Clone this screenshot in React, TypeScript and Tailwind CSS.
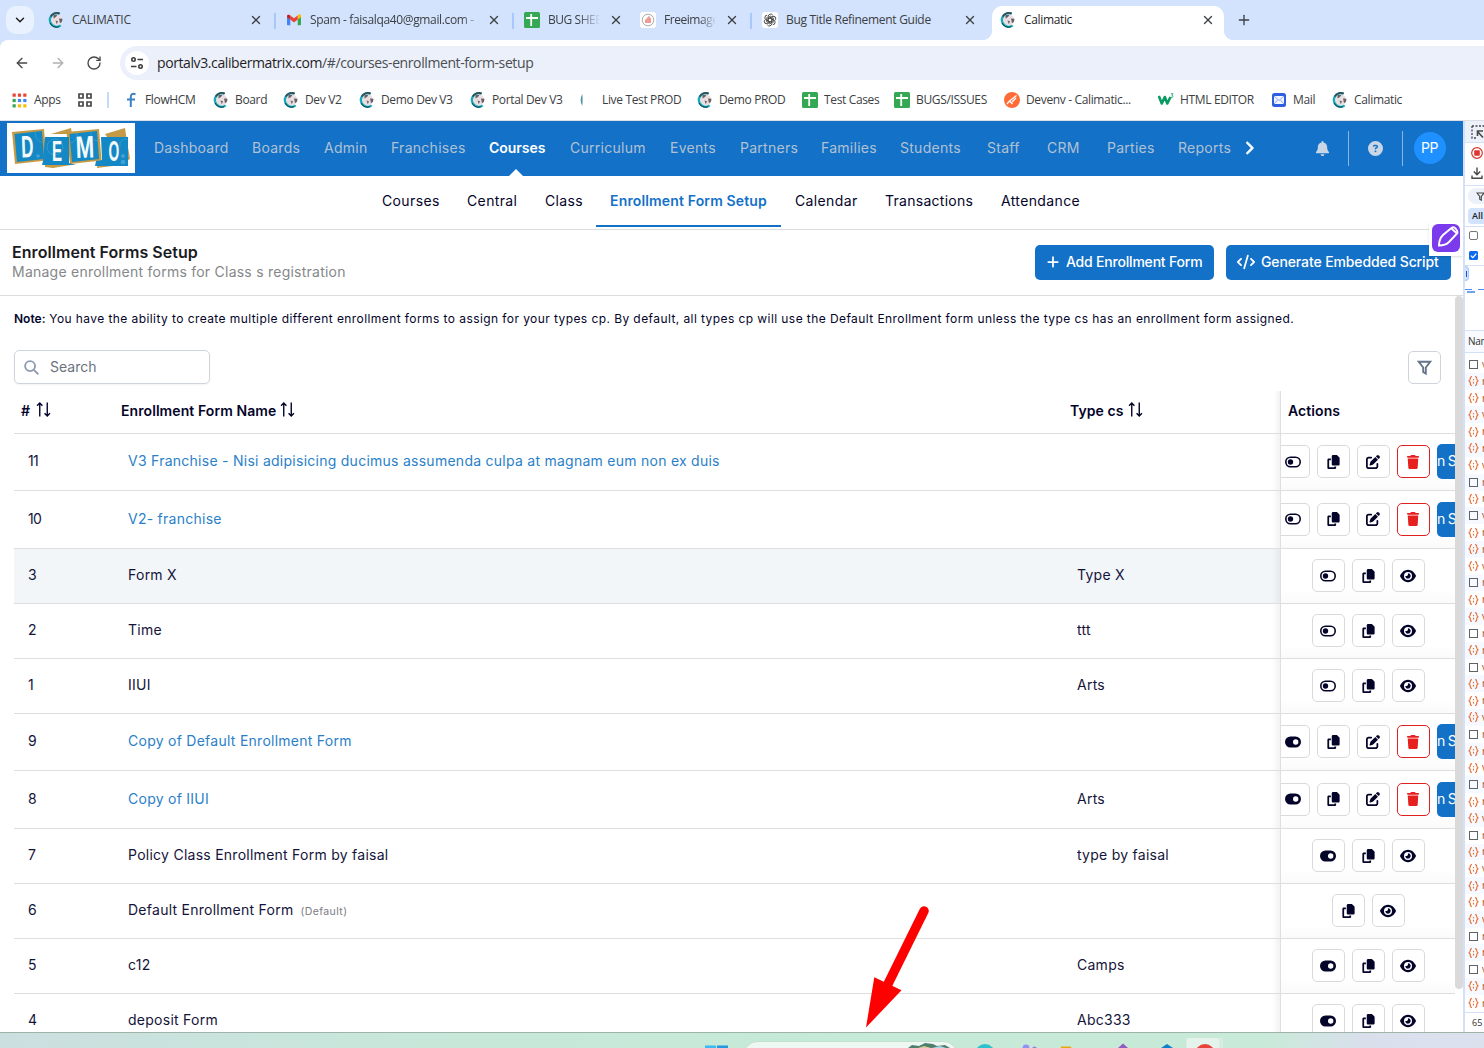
import React from "react";
import {
  FaBell,
  FaCircleQuestion,
  FaChevronRight,
  FaPlus,
  FaCode,
  FaTrash,
  FaEye,
  FaPenToSquare,
} from "react-icons/fa6";
import { ArrowLeft, ArrowRight, RotateCw, ChevronDown, X, Plus } from "lucide-react";

/* ---------- small drawings ---------- */

function Globe() {
  return (
    <svg viewBox="0 0 16 16" className="size-4 shrink-0">
      <circle cx="8.5" cy="7.800" r="5.600" fill="#eadfe0" />
      <path d="M5.500 3l4-.3-1.500 2.300-2.500 1.500zM7.500 8.500l2.500.8-1.200 3zM11 6.500l3.500.3-.5 3-2 1.500z" fill="#6d5f66" />
      <path d="M11.500 1.700A6.800 6.800 0 1 0 12.700 13.400" fill="none" stroke="#15a9ba" strokeWidth="2.400" />
      <path d="M11.800 1.600A6.900 6.900 0 0 0 2.600 4.600" fill="none" stroke="#3a4a52" strokeWidth="1.600" />
      <path d="M2 11A7 7 0 0 0 11 14.700" fill="none" stroke="#123b46" strokeWidth="1" />
    </svg>
  );
}

function Sheet() {
  return (
    <svg viewBox="0 0 16 16" className="size-4 shrink-0">
      <rect width="16" height="16" rx="1.500" fill="#34a853" />
      <path d="M2 6h12M7.200 2v12" stroke="#fff" strokeWidth="1.800" />
    </svg>
  );
}

function Gmail() {
  return (
    <svg viewBox="0 0 16 16" className="size-4 shrink-0">
      <path d="M1 4v8.500q0 .8.8.8H4.300V6z" fill="#4285f4" />
      <path d="M15 4v8.500q0 .8-.8.8h-2.500V6z" fill="#34a853" />
      <path d="M11.700 3.600v4L15 5.200V3.800c0-1.400-1.600-2-2.600-1.100z" fill="#fbbc04" />
      <path d="M4.300 7.600V3.600L8 6.300l3.700-2.700v4L8 10.400z" fill="#ea4335" />
      <path d="M1 5.200l3.300 2.400v-4l-.7-.5C2.600 2.300 1 2.900 1 4z" fill="#c5221f" />
    </svg>
  );
}

function Freeimage() {
  return (
    <svg viewBox="0 0 16 16" className="size-4 shrink-0">
      <rect width="16" height="16" rx="3" fill="#fff" />
      <circle cx="8" cy="8" r="5.800" fill="none" stroke="#9c9699" strokeWidth=".8" />
      <path d="M5 7.500h1.200L7 5.500h1L8.500 4h1v1.500l1.500.5V11H5z" fill="#ef9a92" />
    </svg>
  );
}

function ChatGpt() {
  return (
    <svg viewBox="0 0 16 16" className="size-4 shrink-0">
      <rect width="16" height="16" rx="3" fill="#fff" />
      <g fill="none" stroke="#444" strokeWidth=".9">
        {[0, 60, 120, 180, 240, 300].map((a) => (
          <path key={a} transform={`rotate(${a} 8 8)`} d="M6.200 9V4.400a2.500 2.500 0 0 1 4.600-1.200M6.200 6.900L9.300 5.100l2.700 1.600" />
        ))}
      </g>
    </svg>
  );
}

function Postman() {
  return (
    <svg viewBox="0 0 16 16" className="size-4 shrink-0">
      <circle cx="8" cy="8" r="8" fill="#ff6c37" />
      <path d="M12.500 3.500L5.500 9l3 3M12 6l-4 4M5.500 9L3 12" stroke="#fff" strokeWidth="1.300" fill="none" />
    </svg>
  );
}

function W3() {
  return (
    <svg viewBox="0 0 16 16" className="size-4 shrink-0">
      <path d="M.8 4l3 7.500L6.800 5l2.500 6.500 3.200-6.500" fill="none" stroke="#0a9b62" strokeWidth="2.600" strokeLinejoin="round" />
      <path d="M13 1.700h2l-1.200 1.500q1.400.2 1.200 1.400-.5 1-2 .6" fill="none" stroke="#0a9b62" strokeWidth=".8" />
    </svg>
  );
}

function MailIcon() {
  return (
    <svg viewBox="0 0 16 16" className="size-4 shrink-0">
      <rect x="1" y="1" width="14" height="14" rx="2.500" fill="#2f5fe0" />
      <rect x="3" y="4" width="10" height="8" fill="#f3f6ff" />
      <path d="M3 4l5 4.500L13 4M3 12l3.500-4M13 12L9.500 8" stroke="#7d9cf0" strokeWidth=".9" fill="none" />
    </svg>
  );
}

function FlowIcon() {
  return (
    <svg viewBox="0 0 16 16" className="size-4 shrink-0">
      <path d="M12.500 2.200Q7.800.8 7.800 5v10M4 7.500h8" fill="none" stroke="#3b82c4" strokeWidth="2" />
    </svg>
  );
}

function LiveIcon() {
  return (
    <svg viewBox="0 0 16 16" className="size-4 shrink-0">
      <path d="M2.300 2Q-1 8 2.300 14Q2.900 8 2.300 2z" fill="#4f93b0" />
    </svg>
  );
}

function DemoLogo() {
  return (
    <svg viewBox="0 0 128 50" className="h-[50px] w-32 bg-white">
      <g fill="#c49a45">
        <path d="M44 11l20-6 1 6zM38 44l0-3 32 0-24 4zM98 11l20-6 1 7 4 24-5 3zM91 39l8 4 14-1-23 3z" />
        <path d="M5 9l32-3 2.500 31.500L8 41z" />
        <path d="M59.500 9l32.500-3 2.500 31.500L63 41z" />
      </g>
      <path d="M38 14h24v26l6 2H35l1-4z" fill="#1388c5" />
      <path d="M94 14h27v29H88l1-5 6-1z" fill="#1388c5" />
      <path d="M7.500 11L35 8l2 28-27 3z" fill="#1388c5" />
      <path d="M62.500 11L90 8l2 28-27 3z" fill="#1388c5" />
      <g fill="none" stroke="#55b3dd" strokeWidth=".7" opacity=".6">
        <circle cx="48" cy="24" r="8" />
        <path d="M28 9q0 9 9 11M84 9q-1 8 7 9M64 20q6-2 6-10M120 16q-8 0-7 8" />
      </g>
      <g fill="#3ea3d4">
        <circle cx="31" cy="33" r="1.800" />
        <circle cx="116" cy="33" r="2" />
        <circle cx="116" cy="39" r="2.300" />
      </g>
      <g fill="#f4f8fa" fontFamily="Liberation Sans" fontWeight="700">
        <text fontSize="31" transform="translate(14.500 34.500) rotate(-2) scale(.55 1)">D</text>
        <text fontSize="29" transform="translate(45 37.500) scale(.52 1)">E</text>
        <text fontSize="31" transform="translate(69 35) rotate(-2) scale(.72 1)">M</text>
        <text fontSize="30" transform="translate(101.500 38) scale(.46 1)">O</text>
      </g>
    </svg>
  );
}

function SortIcon() {
  return (
    <svg viewBox="0 0 14 14" className="-mt-1 h-[15px] w-[15px]" fill="none" stroke="#04042a" strokeWidth="1.300">
      <path d="M3.500 13.500V1M1 3.600L3.500 1 6 3.600M10.500.5V13M8 10.400L10.500 13 13 10.400" />
    </svg>
  );
}

function CopyIcon() {
  return (
    <svg viewBox="0 0 448 512" className="h-3.5 w-[13px]" fill="currentColor">
      <path d="M208 0H332.100c12.700 0 24.900 5.100 33.900 14.100l67.900 67.900c9 9 14.100 21.200 14.100 33.900V336c0 26.500-21.500 48-48 48H208c-26.500 0-48-21.500-48-48V48c0-26.500 21.500-48 48-48zM48 128h80v64H64V448H256V416h64v48c0 26.500-21.500 48-48 48H48c-26.500 0-48-21.500-48-48V176c0-26.500 21.500-48 48-48z" />
    </svg>
  );
}

function Toggle({ on }: { on?: boolean }) {
  return on ? (
    <svg viewBox="0 0 16 12" className="h-3 w-4">
      <rect y=".5" width="16" height="11" rx="5.500" fill="#04042a" />
      <circle cx="10.700" cy="6" r="2.700" fill="#fff" />
    </svg>
  ) : (
    <svg viewBox="0 0 16 12" className="h-3 w-4">
      <rect x=".8" y="1.300" width="14.400" height="9.400" rx="4.700" fill="none" stroke="#04042a" strokeWidth="1.600" />
      <circle cx="5.500" cy="6" r="2.700" fill="#04042a" />
    </svg>
  );
}

function Funnel({ className }: { className: string }) {
  return (
    <svg viewBox="0 0 16 16" className={className} fill="none" stroke="currentColor" strokeWidth="2">
      <path d="M1.800 1.800h12.400L9.400 8v6.500L6.600 12.800V8z" />
    </svg>
  );
}

/* ---------- browser chrome ---------- */

function TabClose() {
  return <X className="size-3.5 shrink-0 text-[#3c4043]" strokeWidth={2.300} />;
}

function TabStrip() {
  return (
    <div className="flex h-10 shrink-0 items-end bg-[#d3e3fd] text-xs tracking-[-0.35px] text-[#3c4043]">
      <div className="mb-1.5 ml-1.5 flex size-7 shrink-0 items-center justify-center rounded-[10px] bg-[#e9f0fe]">
        <ChevronDown className="size-3.5 text-[#1f1f1f]" strokeWidth={2.500} />
      </div>
      <div className="flex h-10 w-[240px] items-center pr-[11px] pl-3.5">
        <Globe />
        <span className="ml-2 grow tracking-[-0.2px]">CALIMATIC</span>
        <TabClose />
      </div>
      <div className="flex h-10 w-[238px] items-center">
        <div className="mt-0.5 h-4 w-0.5 bg-[#a8c7fa]" />
        <div className="ml-2.5"><Gmail /></div>
        <span className="ml-2 w-[172px] overflow-hidden whitespace-nowrap [mask-image:linear-gradient(90deg,#000_88%,transparent)]">Spam - faisalqa40@gmail.com -</span>
        <span className="ml-[5px]"><TabClose /></span>
      </div>
      <div className="flex h-10 w-[126px] items-center">
        <div className="mt-0.5 h-4 w-0.5 bg-[#a8c7fa]" />
        <div className="ml-2.5"><Sheet /></div>
        <span className="ml-2 w-[52px] overflow-hidden tracking-[-0.45px] whitespace-nowrap [mask-image:linear-gradient(90deg,#000_60%,transparent)]">BUG SHEE</span>
        <span className="ml-[9px]"><TabClose /></span>
      </div>
      <div className="flex h-10 w-[112px] items-center pl-0.5">
        <Freeimage />
        <span className="ml-2 w-[52px] overflow-hidden tracking-[-0.45px] whitespace-nowrap [mask-image:linear-gradient(90deg,#000_70%,transparent)]">Freeimage</span>
        <span className="ml-[9px]"><TabClose /></span>
      </div>
      <div className="flex h-10 w-[242px] items-center">
        <div className="mt-0.5 h-4 w-0.5 bg-[#a8c7fa]" />
        <div className="ml-2.5"><ChatGpt /></div>
        <span className="ml-2 w-[177px] tracking-[-0.3px] whitespace-nowrap">Bug Title Refinement Guide</span>
        <TabClose />
      </div>
      <div className="relative flex h-[34px] w-[232px] items-center rounded-t-[10px] bg-white pr-[9px] pb-1.5 pl-2 text-[#1f1f1f]">
        <span className="absolute bottom-0 -left-2.5 size-2.5 bg-[radial-gradient(circle_at_0_0,transparent_10px,#fff_10.500px)]" />
        <span className="absolute -right-2.5 bottom-0 size-2.5 bg-[radial-gradient(circle_at_100%_0,transparent_10px,#fff_10.500px)]" />
        <Globe />
        <span className="ml-2 grow">Calimatic</span>
        <TabClose />
      </div>
      <div className="flex h-10 items-center pl-3">
        <Plus className="size-4 text-[#3c4043]" strokeWidth={2} />
      </div>
    </div>
  );
}

function Toolbar() {
  return (
    <div className="shrink-0 bg-[#d3e3fd]">
      <div className="flex h-10 items-center rounded-tl-lg bg-white pt-1.5 text-[#474747]">
        <ArrowLeft className="ml-3.5 size-4" strokeWidth={2} />
        <ArrowRight className="ml-5 size-4 text-[#b0b0b0]" strokeWidth={2} />
        <RotateCw className="ml-5 size-4" strokeWidth={2} />
        <div className="ml-[18px] flex h-[34px] grow items-center rounded-l-full bg-[#ecf0fa]">
          <div className="ml-[5px] flex size-6 items-center justify-center rounded-full bg-white">
            <svg viewBox="0 0 14 14" className="size-3.5" fill="none" stroke="#3c3c3c" strokeWidth="1.600">
              <circle cx="3.500" cy="3.500" r="1.700" />
              <path d="M7.500 3.500H13M1 10.500h5.500" />
              <circle cx="10.500" cy="10.500" r="1.700" />
            </svg>
          </div>
          <span className="ml-2 text-sm tracking-[-0.4px] text-[#4a4d51]">
            <span className="text-[#1f1f1f]">portalv3.calibermatrix.com</span>/#/courses-enrollment-form-setup
          </span>
        </div>
      </div>
    </div>
  );
}

const bookmarks: [React.ReactNode, string, string][] = [
  [<FlowIcon />, "FlowHCM", "w-[90px]"],
  [<Globe />, "Board", "w-[70px]"],
  [<Globe />, "Dev V2", "w-[76px]"],
  [<Globe />, "Demo Dev V3", "w-[111px]"],
  [<Globe />, "Portal Dev V3", "w-[110px]"],
  [<LiveIcon />, "Live Test PROD", "w-[117px]"],
  [<Globe />, "Demo PROD", "w-[105px]"],
  [<Sheet />, "Test Cases", "w-[92px]"],
  [<Sheet />, "BUGS/ISSUES", "w-[110px]"],
  [<Postman />, "Devenv - Calimatic...", "w-[154px]"],
  [<W3 />, "HTML EDITOR", "w-[113px]"],
  [<MailIcon />, "Mail", "w-[61px]"],
  [<Globe />, "Calimatic", "w-[90px]"],
];

function Bookmarks() {
  const colors = ["#ea4335", "#ea4335", "#ea4335", "#34a853", "#4285f4", "#4285f4", "#34a853", "#fbbc04", "#fbbc04"];
  return (
    <div className="flex h-[41px] shrink-0 items-center border-b border-[#dcdfe4] bg-white text-xs tracking-[-0.35px] whitespace-nowrap text-[#3c4043]">
      <svg viewBox="0 0 14 14" className="ml-3 size-[15px]">
        {colors.map((c, i) => (
          <rect key={i} x={(i % 3) * 5 + 0.5} y={Math.floor(i / 3) * 5 + 0.5} width="3" height="3" fill={c} />
        ))}
      </svg>
      <span className="ml-[7px] w-[43px]">Apps</span>
      <svg viewBox="0 0 16 16" className="size-4" fill="none" stroke="#474747" strokeWidth="1.700">
        <path d="M2 2h4v4H2zM10 2h4v4h-4zM2 10h4v4H2zM10 10h4v4h-4z" />
      </svg>
      <div className="mr-3.5 ml-3.5 h-4 w-0.5 bg-[#c7dafc]" />
      {bookmarks.map(([icon, label, w]) => (
        <div key={label + w} className={`flex shrink-0 items-center gap-1.5 ${w}`}>
          {icon}
          <span>{label}</span>
        </div>
      ))}
    </div>
  );
}

/* ---------- application ---------- */

const nav: [string, string][] = [
  ["Dashboard", "w-[98px]"],
  ["Boards", "w-[72px]"],
  ["Admin", "w-[67px]"],
  ["Franchises", "w-[98px]"],
  ["Courses", "w-[81px]"],
  ["Curriculum", "w-[100px]"],
  ["Events", "w-[70px]"],
  ["Partners", "w-[81px]"],
  ["Families", "w-[79px]"],
  ["Students", "w-[87px]"],
  ["Staff", "w-[60px]"],
  ["CRM", "w-[60px]"],
  ["Parties", "w-[71px]"],
  ["Reports", "w-[65px]"],
];

function AppNav() {
  return (
    <div className="flex h-[55px] shrink-0 items-center bg-[#1371c8] pb-px text-sm tracking-[0.27px] text-[#b1c1d2]">
      <div className="ml-[7px]"><DemoLogo /></div>
      <div className="ml-[19px] flex pb-px">
        {nav.map(([label, w]) =>
          label === "Courses" ? (
            <div key={label} className={`relative font-semibold tracking-[-0.05px] text-white ${w}`}>
              {label}
              <span className="absolute top-[31px] left-[18.500px] border-x-8 border-b-8 border-x-transparent border-b-white" />
            </div>
          ) : (
            <div key={label} className={w}>{label}</div>
          ),
        )}
      </div>
      <FaChevronRight className="-ml-[1.500px] size-3.5 text-white" strokeWidth={30} stroke="white" />
      <FaBell className="ml-[59px] size-[15px] text-[#c9d6e6]" />
      <div className="ml-[18px] h-[35px] w-px bg-[#8db4dc]" />
      <FaCircleQuestion className="ml-[19px] size-[15px] text-[#c9d6e6]" />
      <div className="ml-[19px] h-[35px] w-px bg-[#8db4dc]" />
      <div className="ml-[11px] flex size-8 items-center justify-center rounded-full bg-[#1e90ff] pb-px tracking-[-0.4px] text-white">PP</div>
    </div>
  );
}

function SubNav() {
  return (
    <div className="flex h-[54px] shrink-0 border-b border-[#dcdcdc] pl-[368px] text-sm leading-[49px] tracking-[0.37px] text-[#04042a]">
      <span className="w-[85px] pl-3.5">Courses</span>
      <span className="w-[78px] pl-3.5">Central</span>
      <span className="w-[65px] pl-3.5">Class</span>
      <span className="h-[51px] w-[185px] border-b-2 border-[#1371c8] text-center font-semibold tracking-[0.14px] whitespace-nowrap text-[#1371c8]">Enrollment Form Setup</span>
      <span className="w-[90px] pl-3.5">Calendar</span>
      <span className="w-[116px] pl-3.5 tracking-[0.27px]">Transactions</span>
      <span className="w-[110px] pl-3.5">Attendance</span>
    </div>
  );
}

function PageHeader() {
  return (
    <div className="relative flex h-[66px] shrink-0 items-center justify-between border-b border-[#dcdcdc] pr-3 pl-3">
      <div className="pb-0.5">
        <h1 className="text-base leading-5 font-semibold tracking-[0.06px] text-[#1b1b1f]">Enrollment Forms Setup</h1>
        <p className="text-sm leading-5 tracking-[0.24px] text-[#85878a]">Manage enrollment forms for Class s registration</p>
      </div>
      <div className="flex gap-3 text-sm font-medium tracking-[-0.12px] whitespace-nowrap text-white">
        <button className="flex h-[35px] w-[179px] items-center rounded-[5px] bg-[#1371c8] pb-px pl-[11px] tracking-[-0.2px]">
          <FaPlus className="mr-1.5 size-3.5" />
          Add Enrollment Form
        </button>
        <button className="flex h-[35px] w-[225px] items-center rounded-[5px] bg-[#1371c8] pb-px pl-[11px]">
          <FaCode className="mr-1.5 size-[18px]" />
          Generate Embedded Script
        </button>
      </div>
      <div className="absolute -top-2 right-0 size-[34px] bg-white pt-[2px] pl-[3px] shadow-sm">
        <svg viewBox="0 0 28 28" className="size-7">
          <rect width="28" height="28" rx="6" fill="#7c3aed" />
          <path d="M7 21.500Q7 15 11 11L20 3.500Q22 2.500 24 5T25.500 9L17 18Q13.500 21.500 7 21.500zM19.500 4.500l5.500 5" fill="none" stroke="#fff" strokeWidth="1.900" />
        </svg>
      </div>
    </div>
  );
}

type Row = {
  n: string;
  name: string;
  type?: string;
  link?: boolean;
  on?: boolean;
  h: string;
  shade?: boolean;
  noToggle?: boolean;
  tag?: string;
};

const rows: Row[] = [
  { n: "11", name: "V3 Franchise - Nisi adipisicing ducimus assumenda culpa at magnam eum non ex duis", link: true, h: "h-[57px]" },
  { n: "10", name: "V2- franchise", link: true, h: "h-[58px]" },
  { n: "3", name: "Form X", type: "Type X", h: "h-[55px]", shade: true },
  { n: "2", name: "Time", type: "ttt", h: "h-[55px]" },
  { n: "1", name: "IIUI", type: "Arts", h: "h-[55px]" },
  { n: "9", name: "Copy of Default Enrollment Form", link: true, on: true, h: "h-[57px]" },
  { n: "8", name: "Copy of IIUI", type: "Arts", link: true, on: true, h: "h-[58px]" },
  { n: "7", name: "Policy Class Enrollment Form by faisal", type: "type by faisal", on: true, h: "h-[55px]" },
  { n: "6", name: "Default Enrollment Form", tag: "(Default)", noToggle: true, h: "h-[55px]" },
  { n: "5", name: "c12", type: "Camps", on: true, h: "h-[55px]" },
  { n: "4", name: "deposit Form", type: "Abc333", on: true, h: "h-[55px]" },
];

function IconBtn({ children, danger }: { children: React.ReactNode; danger?: boolean }) {
  return (
    <span
      className={`flex size-[33px] shrink-0 items-center justify-center rounded-[5px] border bg-white pr-px ${
        danger ? "border-[#e01f1f] text-[#e5201f]" : "border-[#dadada] text-[#04042a]"
      }`}
    >
      {children}
    </span>
  );
}

function Actions({ row }: { row: Row }) {
  const pad = row.link ? "-ml-1" : row.noToggle ? "ml-[51px]" : "ml-[31px]";
  return (
    <div className="flex w-[175px] shrink-0 items-center overflow-hidden border-l border-[#dfdfe3] bg-white bg-[linear-gradient(180deg,#fff_75%,#fafafa)] pb-px">
      <div className={`flex shrink-0 items-center gap-[7px] ${pad}`}>
        {!row.noToggle && <IconBtn><Toggle on={row.on} /></IconBtn>}
        <IconBtn><CopyIcon /></IconBtn>
        {row.link ? (
          <>
            <IconBtn><FaPenToSquare className="size-3.5" /></IconBtn>
            <IconBtn danger><FaTrash className="size-3.5" /></IconBtn>
            <span className="h-[35px] w-[90px] shrink-0 rounded-[5px] bg-[#1371c8] text-sm leading-[34px] tracking-[-0.7px] text-white">n S</span>
          </>
        ) : (
          <IconBtn><FaEye className="size-4" /></IconBtn>
        )}
      </div>
    </div>
  );
}

function Table() {
  return (
    <div className="mt-[7px] ml-3.5 w-[1441px] text-sm tracking-[0.26px] text-[#14143a]">
      <div className="flex h-[43px] border-b border-[#dedede] font-semibold tracking-[0.08px] text-[#04042a]">
        <div className="flex w-[107px] items-center gap-1 pb-0.5 pl-[7px]"><span className="w-[11px]">#</span> <SortIcon /></div>
        <div className="flex w-[949px] items-center gap-1 pb-0.5">Enrollment Form Name <SortIcon /></div>
        <div className="flex w-[210px] items-center gap-1 bg-[linear-gradient(270deg,#f2f2f2,#fff_6px)] pb-0.5">Type cs <SortIcon /></div>
        <div className="flex w-[175px] items-center border-l border-[#dfdfe3] pb-0.5 pl-[7px]">Actions</div>
      </div>
      {rows.map((r) => (
        <div key={r.n} className={`flex border-b border-[#dedede] ${r.h} ${r.shade ? "bg-[#f3f6f9]" : ""}`}>
          <div className="flex w-[107px] items-center pb-0.5 pl-3.5 tracking-[-0.6px]">{r.n}</div>
          <div className={`flex w-[949px] items-center pb-0.5 pl-[7px] ${r.link ? "text-[#2b7fc9]" : ""}`}>
            {r.name}
            {r.tag && <span className="mt-0.5 ml-[7px] text-[10.5px] tracking-[0.4px] text-[#7b7b84]">{r.tag}</span>}
          </div>
          <div className="flex w-[210px] items-center bg-[linear-gradient(270deg,rgba(0,0,0,0.05),transparent_8px)] pb-0.5 pl-[7px]">{r.type}</div>
          <Actions row={r} />
        </div>
      ))}
    </div>
  );
}

function Content() {
  return (
    <div className="flex min-h-0 grow overflow-hidden">
      <div className="w-[1455px] shrink-0">
        <p className="mt-[13px] ml-3.5 text-xs leading-5 tracking-[0.42px] whitespace-nowrap text-[#04042a]">
          <b className="font-semibold tracking-normal">Note:</b> You have the ability to create multiple different enrollment forms to assign for your types cp. By default, all types cp will use the Default Enrollment form unless the type cs has an enrollment form assigned.
        </p>
        <div className="mt-[21px] ml-3.5 flex h-[34px] items-center justify-between pr-3.5">
          <div className="flex h-[34px] w-[196px] items-center rounded-[5px] border border-[#cfd3dc] pl-[9px] text-sm text-[#6b7280] shadow-xs">
            <svg viewBox="0 0 16 16" className="mr-[11px] size-[15px]" fill="none" stroke="#8f9bb0" strokeWidth="2">
              <circle cx="6.500" cy="6.500" r="5.300" />
              <path d="M10.500 10.500l4.700 4.700" />
            </svg>
            Search
          </div>
          <div className="flex size-[33px] items-center justify-center rounded-[5px] border border-[#cfd3dc] text-[#64748b]">
            <Funnel className="size-[15px]" />
          </div>
        </div>
        <Table />
      </div>
      <div className="h-[693px] w-2 rounded-full bg-[#dadada]" />
    </div>
  );
}

/* ---------- devtools strip ---------- */

const requests = "cjjjjjjcjcjjjcjjcjcjjjcjjcjjcjjjjjcjcjj";

function DevTools() {
  return (
    <div className="flex w-[21px] shrink-0 flex-col overflow-hidden border-l-2 border-[#d3e0f8] bg-white text-[#474747]">
      <div className="h-[22px] shrink-0 border-b border-[#d3e0f8] bg-[#ecf1fa] pt-1 pl-1.5">
        <svg viewBox="0 0 14 14" className="size-3.5 max-w-none" fill="none" stroke="#474747" strokeWidth="1.300">
          <path d="M1 1h13M1 1v12h4" strokeDasharray="2 1.500" />
          <path d="M12 12.500L6.500 6.500M6.500 11V6h5.500" strokeWidth="1.600" />
        </svg>
      </div>
      <div className="flex h-[43px] shrink-0 flex-col gap-2 border-b border-[#d3e0f8] pt-1 pl-1.5">
        <svg viewBox="0 0 12 12" className="size-3 shrink-0">
          <circle cx="6" cy="6" r="5.300" fill="none" stroke="#dc362e" strokeWidth="1.200" />
          <rect x="3.200" y="3.200" width="5.600" height="5.600" rx=".8" fill="#dc362e" />
        </svg>
        <svg viewBox="0 0 12 12" className="size-3 shrink-0" fill="none" stroke="#474747" strokeWidth="1.400">
          <path d="M6 .5v7M2.800 4.600L6 7.800l3.200-3.200M1 8.500v2.800h10V8.500" />
        </svg>
      </div>
      <div className="flex h-[41px] shrink-0 flex-col gap-1 border-b border-[#d3e0f8] pt-0.5 pl-[3px]">
        <div className="flex h-4 w-10 shrink-0 items-center rounded-full bg-[#ecf1fa] pl-2"><Funnel className="size-[9px]" /></div>
        <div className="h-4 w-10 shrink-0 rounded bg-[#d3e3fd] pl-1 text-[9px] leading-4 font-semibold text-[#1f1f1f]">All</div>
      </div>
      <div className="flex h-[39px] shrink-0 flex-col gap-[11px] border-b border-[#d3e0f8] pt-1 pl-1">
        <div className="size-[9px] shrink-0 rounded-[2px] border border-[#767676]" />
        <svg viewBox="0 0 9 9" className="size-[9px] shrink-0">
          <rect width="9" height="9" rx="1.500" fill="#0b6bef" />
          <path d="M1.800 4.600l2 2 3.500-4" stroke="#fff" strokeWidth="1.300" fill="none" />
        </svg>
      </div>
      <div className="h-[65px] shrink-0 border-b border-[#d3e0f8]">
        <div className="flex h-[15px] w-1 items-center justify-center rounded-r border border-l-0 border-[#a8c7fa] bg-[#d3e3fd]">
          <div className="h-1.5 w-px bg-[#0b57d0]" />
        </div>
        <svg viewBox="0 0 20 8" className="mt-1.5 h-2 w-5 max-w-none">
          <path d="M0 2.500h7M13 2.500h7" stroke="#4c8df5" strokeWidth="1.200" />
          <path d="M2 5h8" stroke="#6ea3f4" strokeWidth="2" />
        </svg>
      </div>
      <div className="h-[22px] shrink-0 border-b border-[#d3e0f8] bg-[#f8faff] pl-[3px] text-[10px] leading-[21px] tracking-[-0.3px] text-[#303030]">Name</div>
      <div className="h-[3px] shrink-0" />
      {requests.split("").map((k, i) => (
        <div key={i} className={`flex h-[16.820px] shrink-0 items-center ${i % 2 ? "bg-[#f6f9ff]" : ""}`}>
          {k === "c" ? (
            <div className="mr-1 ml-1 size-[9px] shrink-0 border border-[#5f6368]" />
          ) : (
            <svg viewBox="0 0 11 10" className="mr-[3px] ml-[3px] h-2.5 w-[11px] shrink-0" fill="none" stroke="#e8733a" strokeWidth="1.200">
              <path d="M4 .7Q2.300.7 2.300 2.500T.6 5Q2.300 5 2.300 7.300T4 9.300M7 .7q1.700 0 1.700 1.800T10.400 5Q8.700 5 8.700 7.300T7 9.300M5.500 3v1.300M5.500 5.800v1.700" />
            </svg>
          )}
          <span className="text-[10px] text-[#a8501f]">{i % 3 ? "r" : "v"}</span>
        </div>
      ))}
      <div className="grow border-t border-[#d3e0f8] pl-[7px] text-[9px] leading-5 text-[#303030]">65</div>
    </div>
  );
}

/* ---------- desktop taskbar ---------- */

function Taskbar() {
  return (
    <div className="h-4 shrink-0 overflow-hidden border-t border-[#9fb3aa] bg-[linear-gradient(90deg,#cbdfe0,#c7e8d9_30%,#c5ead7_60%,#c8ead8_85%,#d9e0ec_92%,#dce1ee)]">
      <svg viewBox="0 0 1484 15" className="h-[15px] w-[1484px]">
        <path d="M705 12.500h11V15h-11z" fill="#3cb9f2" />
        <path d="M717 12.500h11V15h-11z" fill="#2397e0" />
        <rect x="743" y="8.500" width="215" height="34" rx="15" fill="#eef8f3" stroke="#b4d3c3" strokeWidth=".6" />
        <path d="M908 15l4-3 7 1 6-3 8 1 4 2 8-1 5 3z" fill="#4d7f6c" />
        <path d="M918 15l6-2 7 2z" fill="#d9c898" />
        <path d="M932 15l8-2 6 2z" fill="#a8d8ea" />
        <circle cx="985" cy="21" r="10" fill="#2fc0cd" />
        <circle cx="1026" cy="15" r="3.500" fill="#968ff5" />
        <circle cx="1034.500" cy="16" r="2.500" fill="#9c7fd8" />
        <path d="M1061 15v-1.500h9l2 1.500z" fill="#e5a70a" />
        <path d="M1118 15l5-4.500 5 4.500z" fill="#8f5bc0" />
        <path d="M1161 15l6-4 6 4z" fill="#0f7fc8" />
        <rect x="1186" y="4.500" width="37" height="30" rx="3" fill="#d7eee3" />
        <rect x="1186" y="4.500" width="34" height="30" rx="3" fill="#e4f3ec" stroke="#c3dccf" strokeWidth=".5" />
        <circle cx="1205" cy="21" r="10" fill="#e6443a" />
      </svg>
    </div>
  );
}

export default function App() {
  return (
    <div className="relative flex h-[1048px] w-[1484px] flex-col overflow-hidden bg-white font-['Open_Sans',sans-serif]">
      <TabStrip />
      <Toolbar />
      <Bookmarks />
      <div className="flex min-h-0 grow basis-0">
        <div className="flex w-[1463px] shrink-0 flex-col overflow-hidden font-['Inter',sans-serif]">
          <AppNav />
          <SubNav />
          <PageHeader />
          <Content />
        </div>
        <DevTools />
      </div>
      <Taskbar />
      <svg viewBox="0 0 66 124" className="absolute top-[905px] left-[864px] h-[124px] w-[66px]">
        <path d="M60 6L22 83" stroke="#fe0000" strokeWidth="9.500" strokeLinecap="round" />
        <path d="M10.300 72.300L37.500 85.300L2 122.500z" fill="#fe0000" />
      </svg>
    </div>
  );
}
